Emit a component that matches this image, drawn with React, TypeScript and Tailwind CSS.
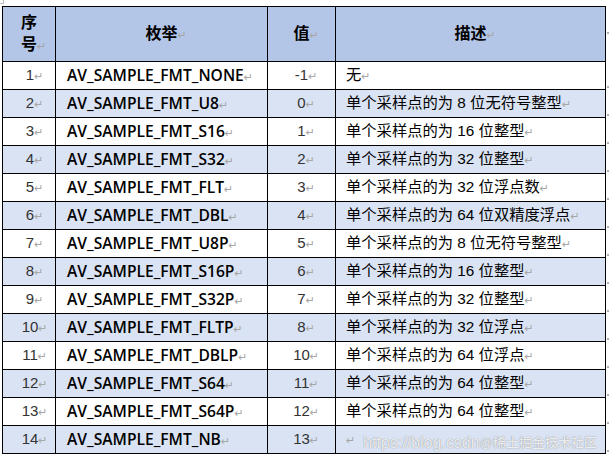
import type { ReactNode } from "react";

// 音频采样格式对照表（Word 表格截图的复刻）

type Fila = {
  n: string;
  nome: string;
  valor: string;
  desc: string;
};

const FILAS: Fila[] = [
  { n: "1", nome: "AV_SAMPLE_FMT_NONE", valor: "-1", desc: "无" },
  { n: "2", nome: "AV_SAMPLE_FMT_U8", valor: "0", desc: "单个采样点的为 8 位无符号整型" },
  { n: "3", nome: "AV_SAMPLE_FMT_S16", valor: "1", desc: "单个采样点的为 16 位整型" },
  { n: "4", nome: "AV_SAMPLE_FMT_S32", valor: "2", desc: "单个采样点的为 32 位整型" },
  { n: "5", nome: "AV_SAMPLE_FMT_FLT", valor: "3", desc: "单个采样点的为 32 位浮点数" },
  { n: "6", nome: "AV_SAMPLE_FMT_DBL", valor: "4", desc: "单个采样点的为 64 位双精度浮点" },
  { n: "7", nome: "AV_SAMPLE_FMT_U8P", valor: "5", desc: "单个采样点的为 8 位无符号整型" },
  { n: "8", nome: "AV_SAMPLE_FMT_S16P", valor: "6", desc: "单个采样点的为 16 位整型" },
  { n: "9", nome: "AV_SAMPLE_FMT_S32P", valor: "7", desc: "单个采样点的为 32 位整型" },
  { n: "10", nome: "AV_SAMPLE_FMT_FLTP", valor: "8", desc: "单个采样点的为 32 位浮点" },
  { n: "11", nome: "AV_SAMPLE_FMT_DBLP", valor: "10", desc: "单个采样点的为 64 位浮点" },
  { n: "12", nome: "AV_SAMPLE_FMT_S64", valor: "11", desc: "单个采样点的为 64 位整型" },
  { n: "13", nome: "AV_SAMPLE_FMT_S64P", valor: "12", desc: "单个采样点的为 64 位整型" },
  { n: "14", nome: "AV_SAMPLE_FMT_NB", valor: "13", desc: "" },
];

const fonteCjk = "font-['Liberation_Sans','Noto_Sans_CJK_SC',sans-serif]";
const fonteCab = "font-['Liberation_Serif','Noto_Sans_CJK_SC',serif]";
const fonteEnum = "font-['Open_Sans','Noto_Sans_CJK_SC',sans-serif]";

function Marca({ hang = true }: { hang?: boolean }) {
  // marca de paragrafo do Word
  return (
    <span
      className={
        (hang ? "inline-block w-0 " : "") +
        "whitespace-nowrap font-['DejaVu_Sans',sans-serif] text-[11px] font-normal text-[#a6a6a6]"
      }
    >
      ↵
    </span>
  );
}

function Celula({
  children,
  className = "",
}: {
  children: ReactNode;
  className?: string;
}) {
  return (
    <div className={"flex items-center border-r border-b border-black " + className}>
      {children}
    </div>
  );
}

export default function App() {
  return (
    <div className="relative h-[459px] w-[609px] overflow-hidden bg-white">
      {/* canto de recorte */}
      <div className="absolute left-0 top-0 h-[4px] w-[4px] border-r border-b border-[#bdbdbd]" />

      <div className="pl-[2px] pt-[6px]">
        <div className="relative w-[604px] border-l border-t border-black">
          <div className="grid grid-cols-[53px_212px_68px_270px]">
            {/* cabecalho */}
            <Celula className={"h-[55px] justify-center bg-[#b4c6e7] text-[16px] font-bold leading-[22px] text-black " + fonteCab}>
              <span className="pt-[2px] text-center">
                序<br />号<Marca />
              </span>
            </Celula>
            <Celula className={"h-[55px] justify-center bg-[#b4c6e7] text-[16px] font-bold text-black " + fonteCab}>
              <span>枚举<Marca /></span>
            </Celula>
            <Celula className={"h-[55px] justify-center bg-[#b4c6e7] text-[16px] font-bold text-black " + fonteCab}>
              <span>值<Marca /></span>
            </Celula>
            <Celula className={"h-[55px] justify-center bg-[#b4c6e7] text-[16px] font-bold text-black " + fonteCab}>
              <span>描述<Marca /></span>
            </Celula>

            {FILAS.map((f, i) => {
              const fundo = i % 2 === 1 ? "bg-[#dae3f3]" : "bg-white";
              return [
                <Celula key={f.n + "a"} className={"h-[28px] justify-center text-[15px] text-[#333] " + fundo + " " + fonteCjk}>
                  <span className="pl-[2px]">{f.n}<Marca /></span>
                </Celula>,
                <Celula key={f.n + "b"} className={"h-[28px] pl-[11px] text-[15.6px] font-semibold text-black " + fundo + " " + fonteEnum}>
                  <span className="whitespace-nowrap">{f.nome}<Marca /></span>
                </Celula>,
                <Celula key={f.n + "c"} className={"h-[28px] justify-center text-[15px] text-[#333] " + fundo + " " + fonteCjk}>
                  <span>{f.valor}<Marca /></span>
                </Celula>,
                <Celula key={f.n + "d"} className={"h-[28px] pl-[10px] text-[15.3px] text-black " + fundo + " " + fonteCjk}>
                  <span className="whitespace-nowrap">{f.desc}<Marca hang={f.desc !== ""} /></span>
                </Celula>,
              ];
            })}
          </div>

          {/* marca d'agua */}
          <div className="pointer-events-none absolute left-[360px] top-[424px] flex items-center whitespace-nowrap text-white/85 [text-shadow:0_0_1px_rgba(0,0,0,0.5)]">
            <span className="font-['Liberation_Sans',sans-serif] text-[16px]">https://blog.csdn</span>
            <span className={"text-[13px] font-medium " + fonteCjk}>@稀土掘金技术社区</span>
          </div>
        </div>
      </div>

      {/* marcas de fim de linha */}
      <div className="absolute left-[607px] top-[32px] h-[2px] w-[2px] bg-[#b0b0b0]" />
      {FILAS.map((f, i) => (
        <div
          key={f.n}
          className="absolute left-[607px] h-[2px] w-[2px] bg-[#b0b0b0]"
          style={{ top: 86 + i * 28 }}
        />
      ))}
    </div>
  );
}
